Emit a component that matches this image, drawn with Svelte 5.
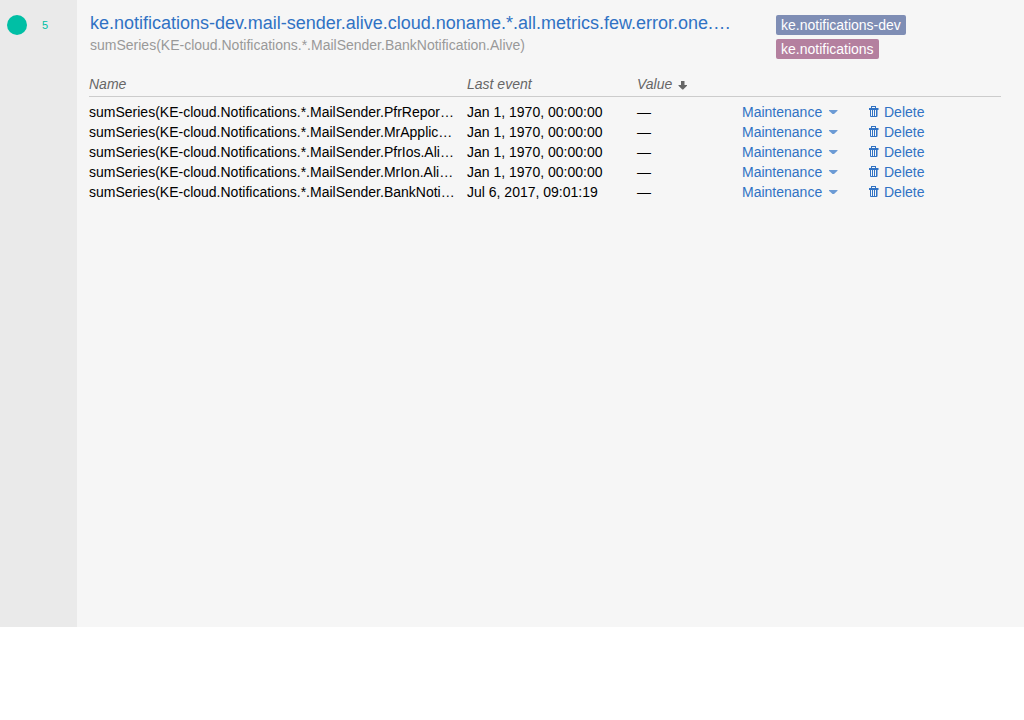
<script>
  const metrics = [
    ['sumSeries(KE-cloud.Notifications.*.MailSender.PfrReport.Alive)', 'Jan 1, 1970, 00:00:00'],
    ['sumSeries(KE-cloud.Notifications.*.MailSender.MrApplication.Alive)', 'Jan 1, 1970, 00:00:00'],
    ['sumSeries(KE-cloud.Notifications.*.MailSender.PfrIos.Alive)', 'Jan 1, 1970, 00:00:00'],
    ['sumSeries(KE-cloud.Notifications.*.MailSender.MrIon.Alive)', 'Jan 1, 1970, 00:00:00'],
    ['sumSeries(KE-cloud.Notifications.*.MailSender.BankNotification.Alive)', 'Jul 6, 2017, 09:01:19'],
  ];
</script>

<article class="trigger">
  <aside class="state">
    <span class="dot"></span>
    <span class="count">5</span>
  </aside>
  <div class="body">
    <header class="head">
      <div class="info">
        <a class="title" href="#trigger">ke.notifications-dev.mail-sender.alive.cloud.noname.*.all.metrics.few.error.one.two.three</a>
        <div class="target">sumSeries(KE-cloud.Notifications.*.MailSender.BankNotification.Alive)</div>
      </div>
      <div class="tags">
        <span class="tag blue">ke.notifications-dev</span>
        <span class="tag pink">ke.notifications</span>
      </div>
    </header>
    <table>
      <colgroup><col class="name" /><col class="event" /><col class="value" /><col class="maintenance" /><col class="delete" /></colgroup>
      <thead>
        <tr>
          <th>Name</th>
          <th>Last event</th>
          <th>Value<svg class="sort" width="9" height="9" viewBox="0 0 9 9" aria-hidden="true"><path d="M3 0h3.500v4H9v.7L5.200 8.600h-.9L.5 4.700V4H3z" fill="currentColor" /></svg></th>
          <th></th>
          <th></th>
        </tr>
      </thead>
      <tbody>
        {#each metrics as [name, event]}
          <tr>
            <td><div class="metric">{name}</div></td>
            <td>{event}</td>
            <td>—</td>
            <td><button type="button">Maintenance<svg class="caret" width="9" height="4" viewBox="0 0 9 4" aria-hidden="true"><path d="M0 0h8.500v.8L5 4H3.500L0 .8z" fill="currentColor" /></svg></button></td>
            <td>
              <button type="button"><svg class="trash" width="11" height="12" viewBox="-1 0 11 12" aria-hidden="true"><path fill="currentColor" fill-rule="evenodd" d="M2 0h5v2h2.500v2H8.500V10q0 1-1 1H2q-1 0-1-1V4H0V2h2zM3 1v1h3V1zM2 4v6h1V4zM4 4v6h1V4zM6 4v6h1V4z" /></svg>Delete</button>
            </td>
          </tr>
        {/each}
      </tbody>
    </table>
  </div>
</article>

<style>
  .trigger {
    display: flex;
    min-height: 627px;
    background: #f6f6f6;
    font: 14px/20px "Liberation Sans", Arial, sans-serif;
    color: #000;
  }
  .state {
    box-sizing: border-box;
    flex: 0 0 77px;
    display: flex;
    align-items: flex-start;
    gap: 15px;
    padding: 15px 7px;
    background: #eaeaea;
  }
  .dot { width: 20px; height: 20px; border-radius: 50%; background: #00bfa5; }
  .count { font-size: 11px; color: #00bfa5; }
  .body { flex: 1; min-width: 0; padding: 11px 23px 0 12px; }
  .head { display: flex; padding: 0 0 0 1px; }
  .info { flex: 1; min-width: 0; padding-right: 45px; }
  .title {
    display: block;
    overflow: hidden;
    white-space: nowrap;
    text-overflow: ellipsis;
    font-size: 18px;
    line-height: 24px;
    color: #3072c4;
    text-decoration: none;
  }
  .target { color: #999; }
  .tags { flex: 0 0 225px; display: flex; flex-direction: column; align-items: flex-start; gap: 4px; padding-top: 4px; }
  .tag { padding: 0 5px; border-radius: 2px; color: #fff; }
  .blue { background: #7f8eb5; }
  .pink { background: #b4809f; }
  table { width: 100%; margin-top: 15px; table-layout: fixed; border-spacing: 0; }
  .event { width: 170px; }
  .value { width: 105px; }
  .maintenance { width: 126px; }
  .delete { width: 133px; }
  th, td { padding: 0; text-align: left; white-space: nowrap; }
  th { padding-bottom: 2px; border-bottom: 1px solid #ccc; font-weight: 400; font-style: italic; color: #666; }
  .sort { margin-left: 6px; vertical-align: -1px; }
  tbody::before { content: ""; display: table-row; height: 5px; }
  .metric { overflow: hidden; text-overflow: ellipsis; margin-right: 12px; }
  button { padding: 0; border: 0; background: none; font: inherit; color: #3072c4; cursor: pointer; display: flex; align-items: center; }
  .caret { margin-left: 7px; color: #6c9bd5; }
  .trash { margin-right: 5px; }
</style>
